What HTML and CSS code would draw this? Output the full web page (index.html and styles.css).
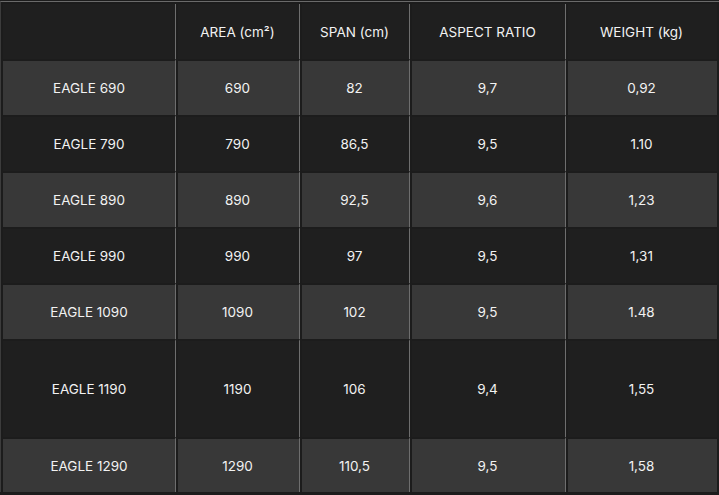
FILE: index.html
```html
<!DOCTYPE html>
<html>
<head>
<meta charset="utf-8">
<link rel="stylesheet" href="styles.css">
</head>
<body>
<table class="specs">
  <colgroup>
    <col class="c1"><col class="c2"><col class="c3"><col class="c4"><col class="c5">
  </colgroup>
  <thead>
    <tr class="head"><th></th><th>AREA (cm²)</th><th>SPAN (cm)</th><th>ASPECT RATIO</th><th>WEIGHT (kg)</th></tr>
  </thead>
  <tbody>
    <tr class="light"><td>EAGLE 690</td><td>690</td><td>82</td><td>9,7</td><td>0,92</td></tr>
    <tr class="dark"><td>EAGLE 790</td><td>790</td><td>86,5</td><td>9,5</td><td>1.10</td></tr>
    <tr class="light"><td>EAGLE 890</td><td>890</td><td>92,5</td><td>9,6</td><td>1,23</td></tr>
    <tr class="dark"><td>EAGLE 990</td><td>990</td><td>97</td><td>9,5</td><td>1,31</td></tr>
    <tr class="light"><td>EAGLE 1090</td><td>1090</td><td>102</td><td>9,5</td><td>1.48</td></tr>
    <tr class="dark tall"><td>EAGLE 1190</td><td>1190</td><td>106</td><td>9,4</td><td>1,55</td></tr>
    <tr class="light last"><td>EAGLE 1290</td><td>1290</td><td>110,5</td><td>9,5</td><td>1,58</td></tr>
  </tbody>
</table>
</body>
</html>
```
FILE: styles.css
```css
html, body {
  margin: 0;
  padding: 0;
  background: #1c1c1c;
}
.specs {
  margin-top: 1px;
  border-collapse: separate;
  border-spacing: 0;
  table-layout: fixed;
  width: 719px;
  border-top: 1px solid #6a6a6a;
  border-left: 1px solid #3c3c3c;
  padding: 2px 2px 0 2px;
  background: #1c1c1c;
  font-family: "Inter", "Noto Sans", sans-serif;
  font-size: 13.5px;
  color: #f2f2f2;
}
.c1 { width: 172px; }
.c2 { width: 124px; }
.c3 { width: 110px; }
.c4 { width: 156px; }
.c5 { width: 152px; }
.specs th, .specs td {
  padding: 0;
  text-align: center;
  vertical-align: middle;
  font-weight: 400;
}
.specs th {
  height: 55px;
  background: #1f1f1f;
}
.specs td {
  height: 54px;
  border-top: 2px solid #1c1c1c;
}
.specs th + th, .specs td + td {
  border-left: 1px solid #6e6e6e;
  box-shadow: inset 2px 0 0 #1c1c1c;
}
.light td { background: #383838; }
.dark td { background: #1f1f1f; }
.tall td { height: 96px; }
.last td { height: 53px; }
```
